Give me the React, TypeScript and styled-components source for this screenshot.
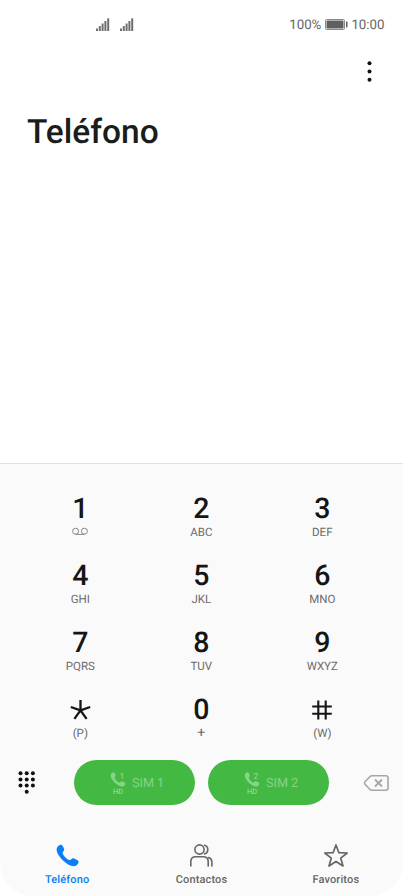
import React from 'react';
import styled, { createGlobalStyle } from 'styled-components';

const GlobalStyle = createGlobalStyle`
  * { box-sizing: border-box; }
  body { margin: 0; background: #fff; font-family: Roboto, sans-serif; text-rendering: geometricPrecision; }
  svg { display: block; overflow: visible; }
`;

const Screen = styled.div`
  width: 403px;
  height: 896px;
  display: flex;
  flex-direction: column;
  background: #fff;
  overflow: hidden;
`;

const StatusBar = styled.header`
  height: 48px;
  padding: 0 18.5px 0 96px;
  display: flex;
  align-items: center;
  justify-content: space-between;
  color: #666;
  font-size: 13.3px;
`;

const SignalGroup = styled.div`
  display: flex;
  gap: 10px;
`;

const StatusInfo = styled.div`
  display: flex;
  align-items: center;
  gap: 3.5px;
  line-height: 16px;
`;

const StatusText = styled.span`
  padding-top: 3px;
`;

const Toolbar = styled.div`
  height: 47px;
  display: flex;
  align-items: center;
  justify-content: flex-end;
  padding-right: 31px;
`;

const PlainButton = styled.button`
  border: 0;
  padding: 0;
  background: none;
  font-family: inherit;
  text-rendering: inherit;
`;

const Title = styled.h1`
  margin: 18px 0 0 27px;
  font-size: 33.5px;
  line-height: 40px;
  font-weight: 500;
  color: #1b1c1c;
`;

const Content = styled.main`
  flex: 1;
`;

const Panel = styled.section`
  height: 433px;
  display: flex;
  flex-direction: column;
  background: #fafafa;
  border-top: 1px solid #e2e2e2;
  border-radius: 0 0 33px 33px;
`;

const Keypad = styled.div`
  display: grid;
  grid-template-columns: repeat(3, 121px);
  grid-auto-rows: 67.1px;
  justify-content: center;
  padding-top: 28px;
  padding-right: 0.4px;
`;

const Key = styled(PlainButton)`
  display: flex;
  flex-direction: column;
  align-items: center;
`;

const Digit = styled.span`
  height: 33px;
  display: flex;
  align-items: center;
  font-size: 28.5px;
  line-height: 33px;
  font-weight: 500;
  color: #151515;
`;

const Letters = styled.span<{ $large?: boolean }>`
  height: 14px;
  display: flex;
  align-items: center;
  font-size: ${p => (p.$large ? 14 : 11.5)}px;
  line-height: 14px;
  color: #6b6b6b;
`;

const Actions = styled.div`
  height: 45px;
  display: flex;
  align-items: center;
  padding: 0 14px 0 18px;
`;

const CallButtons = styled.div`
  display: flex;
  gap: 13px;
  margin: 0 auto 0 39px;
`;

const CallButton = styled(PlainButton)`
  width: 121px;
  height: 45px;
  border-radius: 22.5px;
  background: #43b943;
  color: #87d387;
  display: flex;
  align-items: center;
  gap: 5px;
  padding-left: 36px;
  font-size: 12.6px;
`;

const CallLabel = styled.span`
  padding-top: 2px;
`;

const Tabs = styled.nav`
  display: grid;
  grid-template-columns: repeat(3, 1fr);
  margin-top: 38.6px;
`;

const Tab = styled(PlainButton)<{ $active?: boolean }>`
  display: flex;
  flex-direction: column;
  align-items: center;
  gap: 6px;
  font-size: 11px;
  line-height: 14px;
  font-weight: 500;
  letter-spacing: 0.15px;
  color: ${p => (p.$active ? '#087ff5' : '#666')};
`;

const Signal = () => (
  <svg width="14" height="13" viewBox="0 0 14 13" fill="#707070">
    <rect x="0" y="10.5" width="2" height="2.5" />
    <rect x="2.8" y="8" width="2" height="5" />
    <rect x="5.6" y="5.5" width="2" height="7.5" />
    <rect x="8.4" y="3" width="2" height="10" />
    <rect x="11.2" y="0.3" width="2" height="12.7" />
  </svg>
);

const Battery = () => (
  <svg width="23" height="11" viewBox="0 0 23 11">
    <rect x="0.5" y="0.5" width="19" height="10" rx="1" fill="none" stroke="#8a8a8a" />
    <rect x="1.5" y="1.5" width="17" height="8" fill="#606060" />
    <path d="M21 2.5h.7q.8 0 .8.8v4.4q0 .8-.8.8H21z" fill="#606060" />
  </svg>
);

const HANDSET =
  'M1.2 3.2C2.4 1.5 4.2.4 5.4.8C6.5 1.1 8 4.1 8.2 5.5C8.4 6.9 6.9 7.4 6.6 8.4C6.3 9.6 8.1 12 9.8 13.7C11.5 15.4 13.2 16.4 14.2 16C15.2 15.5 15.7 14.2 17 14.2C18.4 14.2 21.2 15.7 22.2 16.7C23.4 18.1 21.8 20.4 20.1 21.6C17.4 23.5 11.5 21 7 16.5C2.5 12 -.8 6.4 1.2 3.2Z';

const Handset = () => (
  <svg width="23" height="23" viewBox="0 0 23 23" fill="currentColor">
    <path d={HANDSET} />
  </svg>
);

const SimGlyph = ({ n }: { n: number }) => (
  <svg width="17" height="24" viewBox="0 0 17 24" fill="currentColor">
    <path d={HANDSET} transform="translate(0.3 0.8) scale(0.67)" />
    <text x="9.5" y="7.6" fontSize="8.5" fontFamily="Roboto" fill="#9bdc9b">{n}</text>
    <text x="2.9" y="22.6" fontSize="7.4" fontFamily="Roboto" fill="#a6e2a6">HD</text>
  </svg>
);

const Voicemail = () => (
  <svg width="16" height="8" viewBox="0 0 16 8" fill="none" stroke="#888" strokeWidth="1">
    <circle cx="3.6" cy="3.2" r="3" />
    <circle cx="12.4" cy="3.2" r="3" />
    <path d="M3.6 6.4h8.8" />
  </svg>
);

const Star = () => (
  <svg width="21" height="21" viewBox="0 0 21 21" stroke="#151515" strokeWidth="2.3">
    <path d="M10.5 11.3V1M10.5 11.3L.8 8M10.5 11.3L20.2 8M10.5 11.3L4.4 19.8M10.5 11.3L16.6 19.8" />
  </svg>
);

const Hash = () => (
  <svg width="20" height="20" viewBox="0 0 20 20" stroke="#151515" strokeWidth="2.1">
    <path d="M6.3.5v19M13.7.5v19M.2 6.5h19.6M.2 13.7h19.6" />
  </svg>
);

const Dialpad = () => (
  <svg width="17" height="23" viewBox="0 0 17 23" fill="#111">
    {[2.5, 8.7, 14.9].map(x => [2.2, 8.4, 14.6].map(y => <circle key={`${x}-${y}`} cx={x} cy={y} r="2" />))}
    <circle cx="8.7" cy="20.8" r="2" />
  </svg>
);

const Backspace = () => (
  <svg width="25" height="16" viewBox="0 0 25 16" fill="none" stroke="#a6a6a6" strokeWidth="1.6" strokeLinejoin="round">
    <path d="M7.8.8h14q2.2 0 2.2 2.2v10q0 2.2-2.2 2.2h-14q-1 0-1.7-.7L1 9.2q-1-1.2 0-2.4L6.1 1.5q.7-.7 1.7-.7Z" />
    <path d="M11 4.5l7 7M18 4.5l-7 7" strokeWidth="1.8" />
  </svg>
);

const Contacts = () => (
  <svg width="23" height="23" viewBox="0 0 23 23" fill="none" stroke="#666" strokeWidth="1.6" strokeLinecap="round">
    <circle cx="9.5" cy="5.5" r="4.6" />
    <path d="M.8 22v-4.2q0-5 5-5h7.4q5 0 5 5V22M14.5 1.2c4.4 1 4.4 7.6 0 8.7M18.6 13.5q3.3 1.2 3.3 4.8V22" />
  </svg>
);

const Favorite = () => (
  <svg width="24" height="23" viewBox="0 0 24 23" fill="none" stroke="#666" strokeWidth="1.7" strokeLinejoin="round">
    <path d="M12 1l2.9 7.7 8.3.3-6.5 5.1 2.3 7.9-7-4.5L5 22l2.3-7.9L.8 9l8.3-.3Z" />
  </svg>
);

const keys: { id: string; digit: React.ReactNode; sub: React.ReactNode; large?: boolean }[] = [
  { id: '1', digit: '1', sub: <Voicemail /> },
  { id: '2', digit: '2', sub: 'ABC' },
  { id: '3', digit: '3', sub: 'DEF' },
  { id: '4', digit: '4', sub: 'GHI' },
  { id: '5', digit: '5', sub: 'JKL' },
  { id: '6', digit: '6', sub: 'MNO' },
  { id: '7', digit: '7', sub: 'PQRS' },
  { id: '8', digit: '8', sub: 'TUV' },
  { id: '9', digit: '9', sub: 'WXYZ' },
  { id: 'star', digit: <Star />, sub: '(P)' },
  { id: '0', digit: '0', sub: '+', large: true },
  { id: 'hash', digit: <Hash />, sub: '(W)' },
];

export default function App() {
  return (
    <>
      <GlobalStyle />
      <Screen>
        <StatusBar>
          <SignalGroup><Signal /><Signal /></SignalGroup>
          <StatusInfo><StatusText>100%</StatusText><Battery /><StatusText>10:00</StatusText></StatusInfo>
        </StatusBar>
        <Toolbar>
          <PlainButton>
            <svg width="5" height="21" viewBox="0 0 5 21" fill="#111">
              <circle cx="2.5" cy="2.3" r="2" />
              <circle cx="2.5" cy="10.5" r="2" />
              <circle cx="2.5" cy="18.7" r="2" />
            </svg>
          </PlainButton>
        </Toolbar>
        <Title>Teléfono</Title>
        <Content />
        <Panel>
          <Keypad>
            {keys.map(k => (
              <Key key={k.id}>
                <Digit>{k.digit}</Digit>
                <Letters $large={k.large}>{k.sub}</Letters>
              </Key>
            ))}
          </Keypad>
          <Actions>
            <PlainButton><Dialpad /></PlainButton>
            <CallButtons>
              {[1, 2].map(n => (
                <CallButton key={n}><SimGlyph n={n} /><CallLabel>SIM {n}</CallLabel></CallButton>
              ))}
            </CallButtons>
            <PlainButton><Backspace /></PlainButton>
          </Actions>
          <Tabs>
            <Tab $active><Handset />Teléfono</Tab>
            <Tab><Contacts />Contactos</Tab>
            <Tab><Favorite />Favoritos</Tab>
          </Tabs>
        </Panel>
      </Screen>
    </>
  );
}
